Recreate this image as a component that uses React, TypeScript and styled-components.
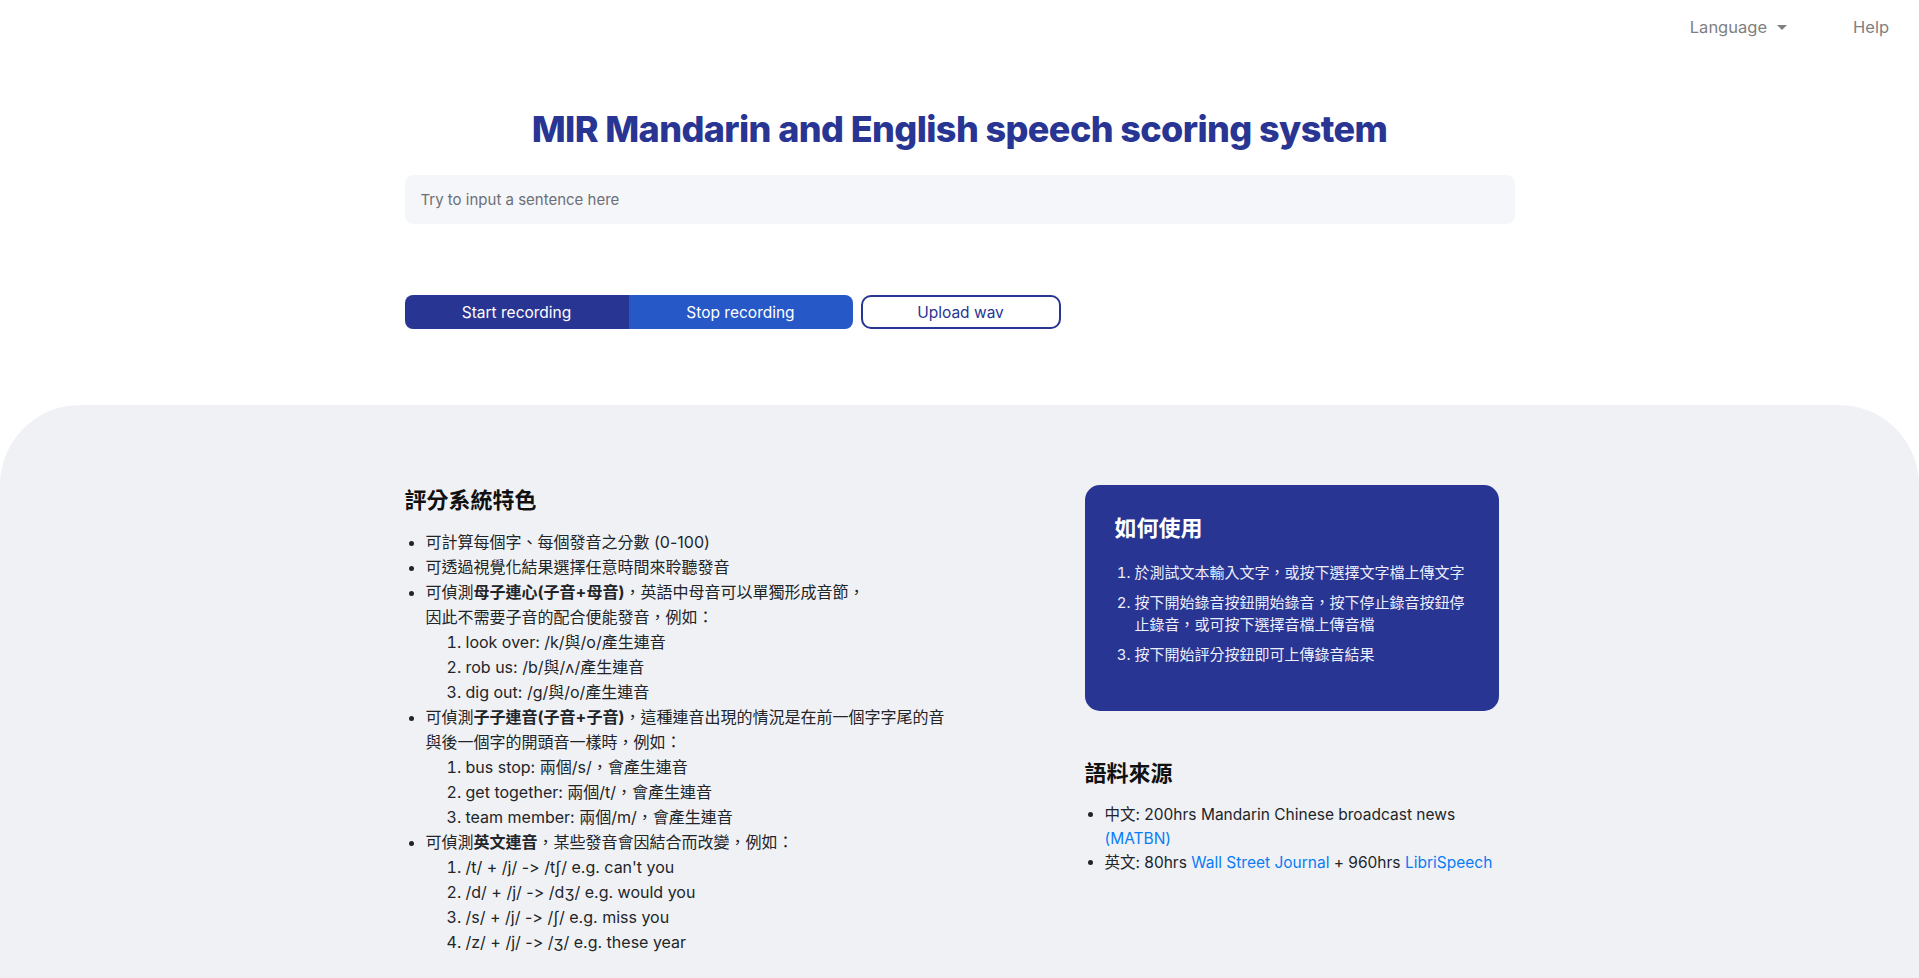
import styled, { createGlobalStyle } from "styled-components";

const GlobalStyle = createGlobalStyle`
  html, body {
    margin: 0;
    padding: 0;
    background: #ffffff;
    color: #212529;
    font-family: Inter, "Noto Sans CJK TC", sans-serif;
    font-feature-settings: "calt" 0;
  }
  * {
    box-sizing: border-box;
  }
`;

const Page = styled.div`
  min-height: 978px;
  display: flex;
  flex-direction: column;
`;

// Top navigation
const Nav = styled.nav`
  height: 54px;
  display: flex;
  justify-content: flex-end;
  align-items: center;
  gap: 66px;
  padding-right: 30px;
`;

const NavItem = styled.span`
  color: #808080;
  font-size: 16.5px;
  display: flex;
  align-items: center;
  gap: 10px;
  cursor: pointer;
`;

const Caret = styled.span`
  width: 0;
  height: 0;
  border-left: 5px solid transparent;
  border-right: 5px solid transparent;
  border-top: 5px solid #808080;
`;

// Header part
const Header = styled.section`
  width: 1110px;
  margin: 0 auto;
  display: flex;
  flex-direction: column;
`;

const Title = styled.h1`
  margin: 52px 0 23px;
  text-align: center;
  font-size: 36px;
  line-height: 46px;
  font-weight: 800;
  letter-spacing: -0.6px;
  color: #283593;
`;

const SentenceInput = styled.input`
  height: 49px;
  width: 100%;
  border: none;
  border-radius: 8px;
  background: #f5f6fa;
  padding: 0 16px;
  font-family: inherit;
  font-size: 15px;
  color: #212529;
  outline: none;

  &::placeholder {
    color: #6c6f76;
  }
`;

const ButtonRow = styled.div`
  display: flex;
  gap: 8px;
  margin-top: 71px;
`;

const ButtonGroup = styled.div`
  display: flex;
  border-radius: 8px;
  overflow: hidden;
`;

const RecordButton = styled.button<{ $tone: "dark" | "light" }>`
  width: 224px;
  height: 34px;
  border: none;
  font-family: inherit;
  font-size: 15.5px;
  color: #ffffff;
  background: ${({ $tone }) => ($tone === "dark" ? "#283593" : "#2758c8")};
  cursor: pointer;
`;

const UploadButton = styled.button`
  width: 200px;
  height: 34px;
  border: 2px solid #283593;
  border-radius: 10px;
  background: #ffffff;
  color: #283593;
  font-family: inherit;
  font-size: 15.5px;
  cursor: pointer;
`;

// Info section
const InfoSection = styled.section`
  flex: 1;
  margin-top: 76px;
  background: #f0f1f5;
  border-radius: 80px 80px 0 0;
  padding: 80px 0 30px;
`;

const InfoGrid = styled.div`
  width: 1110px;
  margin: 0 auto;
  display: grid;
  grid-template-columns: 545px 414px;
  column-gap: 135px;
  align-items: start;
`;

const Heading = styled.h2<{ $light?: boolean }>`
  margin: 0 0 15px;
  font-size: 22px;
  line-height: 30px;
  font-weight: 700;
  color: ${({ $light }) => ($light ? "#ffffff" : "#111111")};
`;

const BulletList = styled.ul`
  margin: 0;
  padding-left: 21px;
  font-size: 16px;
  line-height: 25px;
`;

const NumberList = styled.ol`
  margin: 0;
  padding-left: 40px;
`;

const UsageCard = styled.div`
  background: #283593;
  border-radius: 15px;
  padding: 28px 30px 45px;
  color: #ffffff;
`;

const UsageList = styled.ol`
  margin: 0;
  margin-top: 19px;
  padding-left: 20px;
  font-size: 15px;
  line-height: 22px;
  color: #eceefa;

  li + li {
    margin-top: 8px;
  }
`;

const SourceBlock = styled.div`
  margin-top: 47px;
`;

const SourceList = styled(BulletList)`
  margin-top: 3px;
  padding-left: 20px;
  font-size: 15.5px;
  line-height: 24px;
`;

const Link = styled.a`
  color: #0a7cf5;
  text-decoration: none;
`;

export default function App() {
  return (
    <Page>
      <GlobalStyle />
      <Nav>
        <NavItem>
          Language <Caret />
        </NavItem>
        <NavItem>Help</NavItem>
      </Nav>

      <Header>
        <Title>MIR Mandarin and English speech scoring system</Title>
        <SentenceInput placeholder="Try to input a sentence here" />
        <ButtonRow>
          <ButtonGroup>
            <RecordButton $tone="dark">Start recording</RecordButton>
            <RecordButton $tone="light">Stop recording</RecordButton>
          </ButtonGroup>
          <UploadButton>Upload wav</UploadButton>
        </ButtonRow>
      </Header>

      <InfoSection>
        <InfoGrid>
          <div>
            <Heading>評分系統特色</Heading>
            <BulletList>
              <li>可計算每個字、每個發音之分數 (0-100)</li>
              <li>可透過視覺化結果選擇任意時間來聆聽發音</li>
              <li>
                可偵測<b>母子連心(子音+母音)</b>，英語中母音可以單獨形成音節，
                <br />
                因此不需要子音的配合便能發音，例如：
                <NumberList>
                  <li>look over: /k/與/o/產生連音</li>
                  <li>rob us: /b/與/ʌ/產生連音</li>
                  <li>dig out: /g/與/o/產生連音</li>
                </NumberList>
              </li>
              <li>
                可偵測<b>子子連音(子音+子音)</b>，這種連音出現的情況是在前一個字字尾的音與後一個字的開頭音一樣時，例如：
                <NumberList>
                  <li>bus stop: 兩個/s/，會產生連音</li>
                  <li>get together: 兩個/t/，會產生連音</li>
                  <li>team member: 兩個/m/，會產生連音</li>
                </NumberList>
              </li>
              <li>
                可偵測<b>英文連音</b>，某些發音會因結合而改變，例如：
                <NumberList>
                  <li>/t/ + /j/ -&gt; /tʃ/ e.g. can't you</li>
                  <li>/d/ + /j/ -&gt; /dʒ/ e.g. would you</li>
                  <li>/s/ + /j/ -&gt; /ʃ/ e.g. miss you</li>
                  <li>/z/ + /j/ -&gt; /ʒ/ e.g. these year</li>
                </NumberList>
              </li>
            </BulletList>
          </div>

          <div>
            <UsageCard>
              <Heading $light>如何使用</Heading>
              <UsageList>
                <li>於測試文本輸入文字，或按下選擇文字檔上傳文字</li>
                <li>按下開始錄音按鈕開始錄音，按下停止錄音按鈕停止錄音，或可按下選擇音檔上傳音檔</li>
                <li>按下開始評分按鈕即可上傳錄音結果</li>
              </UsageList>
            </UsageCard>
            <SourceBlock>
              <Heading>語料來源</Heading>
              <SourceList>
                <li>
                  中文: 200hrs Mandarin Chinese broadcast news <Link href="#">(MATBN)</Link>
                </li>
                <li>
                  英文: 80hrs <Link href="#">Wall Street Journal</Link> + 960hrs{" "}
                  <Link href="#">LibriSpeech</Link>
                </li>
              </SourceList>
            </SourceBlock>
          </div>
        </InfoGrid>
      </InfoSection>
    </Page>
  );
}
